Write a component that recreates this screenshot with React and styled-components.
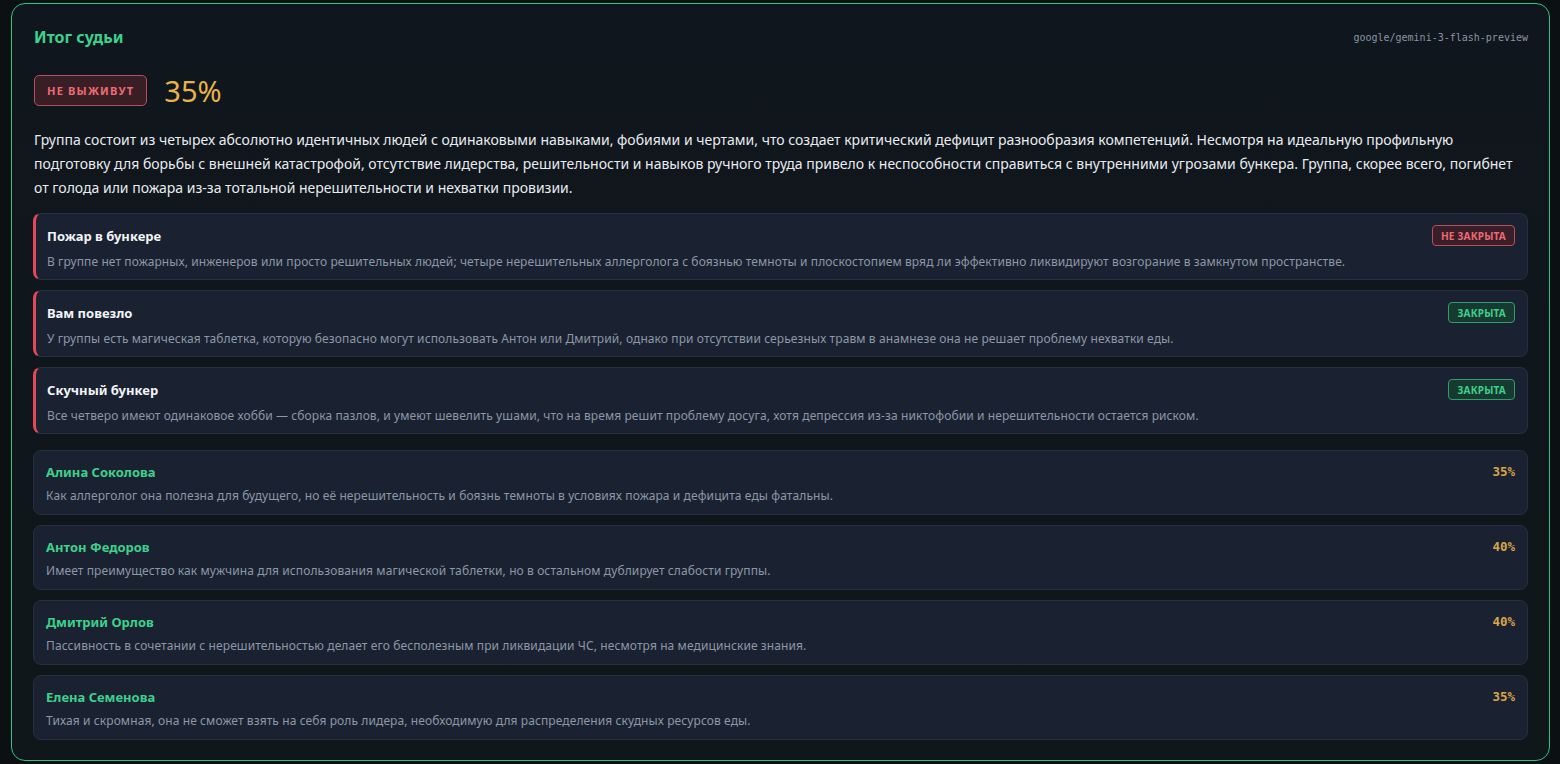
import React from 'react';
import styled, { createGlobalStyle } from 'styled-components';

const GlobalStyle = createGlobalStyle`
  html, body {
    margin: 0;
    background: #0b1113;
  }
  body {
    padding: 3px 10px 0 11px;
    font-family: "Noto Sans", "Open Sans", sans-serif;
    color: #e6e9ee;
  }
`;

const Panel = styled.section`
  box-sizing: border-box;
  border: 1px solid #35c27f;
  border-radius: 14px;
  background: linear-gradient(180deg, #10161d 0%, #0f171a 100%);
  padding: 22px 21px 20px 21px;
  display: flex;
  flex-direction: column;
`;

const Header = styled.div`
  display: flex;
  justify-content: space-between;
  align-items: center;
`;

const Title = styled.h2`
  margin: 0 0 0 1px;
  font-size: 16px;
  line-height: 22px;
  font-weight: 700;
  color: #3ed08c;
`;

const Model = styled.span`
  font-family: "DejaVu Sans Mono", "Liberation Mono", monospace;
  font-size: 10px;
  color: #8a94a3;
`;

const Verdict = styled.div`
  display: flex;
  align-items: center;
  gap: 17px;
  margin-top: 27px;
  padding-left: 1px;
`;

const VerdictBadge = styled.span`
  box-sizing: border-box;
  height: 31px;
  padding: 0 12px;
  display: inline-flex;
  align-items: center;
  border: 1px solid #b4505a;
  border-radius: 5px;
  background: #3a1e26;
  color: #ee6a73;
  font-size: 11px;
  font-weight: 700;
  letter-spacing: 1.2px;
`;

const Score = styled.span`
  font-size: 29px;
  color: #e6b34c;
  line-height: 1;
`;

const Summary = styled.p`
  margin: 22px 0 13px 1px;
  font-size: 14px;
  line-height: 24px;
  color: #e8ebef;
`;

const List = styled.div`
  display: flex;
  flex-direction: column;
  gap: 10px;
  & + & {
    margin-top: 16px;
  }
`;

const Card = styled.div`
  box-sizing: border-box;
  background: #1a2231;
  border: 1px solid #252f40;
  border-left: ${p => (p.$accent ? '3px solid #e5485a' : '1px solid #252f40')};
  border-radius: 8px;
  padding: ${p => (p.$accent ? '11px 12px 8px 11px' : '10px 12px 9px 12px')};
  min-height: ${p => (p.$accent ? '67px' : '65px')};
`;

const CardTop = styled.div`
  display: flex;
  justify-content: space-between;
  align-items: center;
  min-height: 21px;
`;

const CardTitle = styled.span`
  font-size: 13px;
  font-weight: 700;
  color: ${p => (p.$green ? '#3ed08c' : '#f2f4f7')};
`;

const CardText = styled.div`
  margin-top: ${p => (p.$accent ? '8px' : '6px')};
  font-size: 12px;
  letter-spacing: 0.1px;
  line-height: 16px;
  color: #8e97a6;
`;

const Status = styled.span`
  box-sizing: border-box;
  height: 21px;
  padding: 0 8px;
  display: inline-flex;
  align-items: center;
  border-radius: 4px;
  font-size: 10px;
  font-weight: 700;
  letter-spacing: 0.2px;
  border: 1px solid ${p => (p.$closed ? '#2f9e6b' : '#b84e59')};
  background: ${p => (p.$closed ? '#173a30' : '#3a1f29')};
  color: ${p => (p.$closed ? '#3ed08c' : '#ee6a73')};
`;

const Percent = styled.span`
  font-family: "DejaVu Sans Mono", "Liberation Mono", monospace;
  font-size: 12.5px;
  font-weight: 700;
  color: #d7a548;
`;

const threats = [
  {
    title: 'Пожар в бункере',
    text: 'В группе нет пожарных, инженеров или просто решительных людей; четыре нерешительных аллерголога с боязнью темноты и плоскостопием вряд ли эффективно ликвидируют возгорание в замкнутом пространстве.',
    closed: false,
  },
  {
    title: 'Вам повезло',
    text: 'У группы есть магическая таблетка, которую безопасно могут использовать Антон или Дмитрий, однако при отсутствии серьезных травм в анамнезе она не решает проблему нехватки еды.',
    closed: true,
  },
  {
    title: 'Скучный бункер',
    text: 'Все четверо имеют одинаковое хобби — сборка пазлов, и умеют шевелить ушами, что на время решит проблему досуга, хотя депрессия из-за никтофобии и нерешительности остается риском.',
    closed: true,
  },
];

const players = [
  {
    name: 'Алина Соколова',
    text: 'Как аллерголог она полезна для будущего, но её нерешительность и боязнь темноты в условиях пожара и дефицита еды фатальны.',
    score: 35,
  },
  {
    name: 'Антон Федоров',
    text: 'Имеет преимущество как мужчина для использования магической таблетки, но в остальном дублирует слабости группы.',
    score: 40,
  },
  {
    name: 'Дмитрий Орлов',
    text: 'Пассивность в сочетании с нерешительностью делает его бесполезным при ликвидации ЧС, несмотря на медицинские знания.',
    score: 40,
  },
  {
    name: 'Елена Семенова',
    text: 'Тихая и скромная, она не сможет взять на себя роль лидера, необходимую для распределения скудных ресурсов еды.',
    score: 35,
  },
];

export default function App() {
  return (
    <>
      <GlobalStyle />
      <Panel>
        <Header>
          <Title>Итог судьи</Title>
          <Model>google/gemini-3-flash-preview</Model>
        </Header>
        <Verdict>
          <VerdictBadge>НЕ ВЫЖИВУТ</VerdictBadge>
          <Score>35%</Score>
        </Verdict>
        <Summary>
          Группа состоит из четырех абсолютно идентичных людей с одинаковыми навыками, фобиями и чертами, что создает критический дефицит разнообразия компетенций. Несмотря на идеальную профильную подготовку для борьбы с внешней катастрофой, отсутствие лидерства, решительности и навыков ручного труда привело к неспособности справиться с внутренними угрозами бункера. Группа, скорее всего, погибнет от голода или пожара из-за тотальной нерешительности и нехватки провизии.
        </Summary>
        <List>
          {threats.map(t => (
            <Card key={t.title} $accent>
              <CardTop>
                <CardTitle>{t.title}</CardTitle>
                <Status $closed={t.closed}>{t.closed ? 'ЗАКРЫТА' : 'НЕ ЗАКРЫТА'}</Status>
              </CardTop>
              <CardText $accent>{t.text}</CardText>
            </Card>
          ))}
        </List>
        <List>
          {players.map(p => (
            <Card key={p.name}>
              <CardTop>
                <CardTitle $green>{p.name}</CardTitle>
                <Percent>{p.score}%</Percent>
              </CardTop>
              <CardText>{p.text}</CardText>
            </Card>
          ))}
        </List>
      </Panel>
    </>
  );
}
